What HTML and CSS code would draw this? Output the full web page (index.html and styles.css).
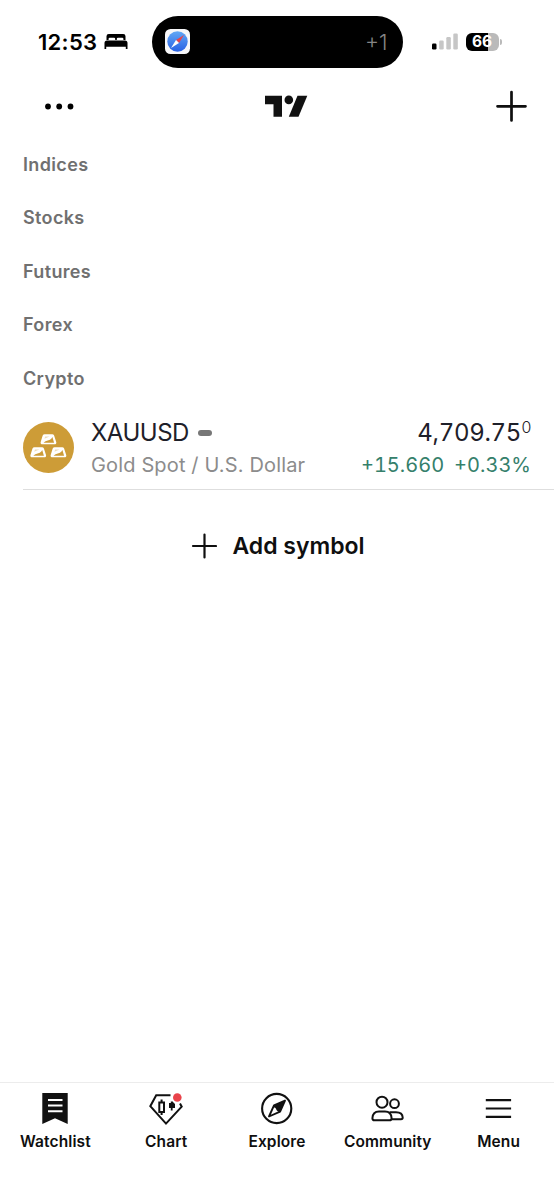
FILE: index.html
```html
<!DOCTYPE html>
<html lang="en">
<head>
<meta charset="utf-8">
<title>Watchlist</title>
<link rel="stylesheet" href="styles.css">
</head>
<body>
<div class="app">
  <div class="status">
    <span class="time">12:53</span>
    <svg class="bed" width="24" height="17" viewBox="0 0 24 17"><path d="M2.500 7V3.300Q2.500 1 4.800 1H19.200Q21.500 1 21.500 3.300V7H19.400V5.800Q19.400 4.700 18.200 4.700H14Q12.800 4.700 12.800 5.800V7H11.200V5.800Q11.200 4.700 10 4.700H5.800Q4.600 4.700 4.600 5.800V7Z"/><path d="M.5 16V10Q.5 7.500 3 7.500H21Q23.500 7.500 23.500 10V16H21.800V13.800H2.200V16Z"/></svg>
    <div class="island">
      <svg width="25" height="25" viewBox="0 0 25 25"><defs><linearGradient id="sky" x1="0" y1="0" x2="0" y2="1"><stop offset="0" stop-color="#62a8f5"/><stop offset="1" stop-color="#2861e4"/></linearGradient></defs><rect width="25" height="25" rx="5.500" fill="#f7f7f9"/><circle cx="12.500" cy="12.500" r="10.200" fill="url(#sky)"/><path d="M19 6L11 11L14 14Z" fill="#e8434b"/><path d="M6 19L11 11L14 14Z" fill="#fff"/></svg>
      <span class="more">+1</span>
    </div>
    <svg class="signal" width="27" height="17" viewBox="0 0 27 17"><rect x="0" y="10.500" width="4.500" height="6" rx="1.200"/><g fill="#c6c6c6"><rect x="7.200" y="7.500" width="4.500" height="9" rx="1.200"/><rect x="14.300" y="4" width="4.500" height="12.500" rx="1.200"/><rect x="21.300" y=".5" width="4.500" height="16" rx="1.200"/></g></svg>
    <div class="battery">66</div>
    <i class="cap"></i>
  </div>
  <header class="header">
    <svg width="32" height="8" viewBox="0 0 32 8"><circle cx="4" cy="4.500" r="2.900"/><circle cx="15.200" cy="4.500" r="2.900"/><circle cx="26.500" cy="4.500" r="2.900"/></svg>
    <svg width="44" height="22" viewBox="0 0 44 22" fill="#111"><path d="M1 .7H18V21.700H9.500V9.200H1Z"/><circle cx="24.800" cy="4.900" r="4.300"/><path d="M33.500 .7H43.300L34.500 21.700H24.800Z"/></svg>
    <svg width="32" height="32" viewBox="0 0 32 32" class="stroke-plus"><path d="M16.500 2V30.500M2.500 16.300H30.500"/></svg>
  </header>
  <main class="list">
    <h2>Indices</h2>
    <h2>Stocks</h2>
    <h2>Futures</h2>
    <h2>Forex</h2>
    <h2>Crypto</h2>
    <div class="row">
      <svg class="gold" width="51" height="51" viewBox="0 0 51 51"><defs><g id="bar"><path d="M4.200 1H11.700Q12.500 1 12.800 1.800L14.900 8.200Q15.200 9.500 14 9.500H2Q.6 9.500 1 8.200L3 1.800Q3.300 1 4.200 1Z" fill="#fff" stroke="#fff" stroke-width="1.700" stroke-linejoin="round"/><path d="M3 8.700L5 7.300L9.500 5.700Q11.300 4.900 11.900 3L13.600 8.700Z" fill="#cd9c37"/><path d="M4.700 2.500H9L3.900 4.800Z" fill="#cd9c37" opacity=".35"/></g></defs><circle cx="25.500" cy="25.500" r="25.500" fill="#cd9c37"/><use href="#bar" x="17.500" y="12"/><use href="#bar" x="7.300" y="25"/><use href="#bar" x="27.500" y="25"/></svg>
      <div class="names"><div class="line"><span class="symbol">XAUUSD</span><i class="dash"></i></div><div class="desc">Gold Spot / U.S. Dollar</div></div>
      <div class="values"><div class="price">4,709.75<sup>0</sup></div><div class="change"><span>+15.660</span><span>+0.33%</span></div></div>
    </div>
    <div class="add"><svg width="26" height="26" viewBox="0 0 26 26"><path d="M13.500 1.500V24.500M2 13H25"/></svg><span>Add symbol</span></div>
  </main>
  <nav class="tabs">
    <div class="tab"><svg width="34" height="34" viewBox="0 0 34 34"><path d="M4.300 1H29.700V32L17 26.300L4.300 32Z" fill="#111"/><path d="M10 8H24.500M10 13.500H24.500M10 19.200H24.500" stroke="#fff" stroke-width="2"/></svg><span>Watchlist</span></div>
    <div class="tab"><svg width="34" height="34" viewBox="0 0 34 34" fill="none" stroke="#111" stroke-width="2"><path d="M21.500 3.200H7.200L1.300 14.200L17 31.600L32.700 14.700L31 11.500"/><path d="M10.300 10.500H15V20H10.300ZM12.600 7.500V10.500M12.600 20V23"/><path d="M22.700 9.500V18.500" stroke-width="1.800"/><path d="M20 11H22L23.500 9.500L26 12V16H20Z" fill="#111" stroke="none"/><circle cx="28.300" cy="5.500" r="4.300" fill="#e9434a" stroke="none"/></svg><span>Chart</span></div>
    <div class="tab"><svg width="34" height="34" viewBox="0 0 34 34"><circle cx="16.700" cy="16.500" r="14.600" fill="none" stroke="#111" stroke-width="2.100"/><path d="M25 8.500L14 13.400L9 24.500L20.100 19.600Z" fill="none" stroke="#111" stroke-width="1.900" stroke-linejoin="round"/><path d="M25 8.500L14 13.400L13.300 15L15.500 16L16.800 18.600L18.800 20.100L20.100 19.600Z" fill="#111"/></svg><span>Explore</span></div>
    <div class="tab"><svg width="34" height="34" viewBox="0 0 34 34" fill="none" stroke="#111" stroke-width="2"><g transform="translate(-.5 0)"><circle cx="11.500" cy="10.200" r="5.500"/><circle cx="24" cy="11.700" r="4.400"/><path d="M4 28.300Q1.900 28.300 1.900 26.200Q2.200 19.400 8.500 19.400H14.500Q20.800 19.400 21.100 26.200Q21.100 28.300 19 28.300Z"/><path d="M19 20.200H25.500Q32 20.200 32.200 25.500Q32.200 27.200 30.500 27.200H21"/></g></svg><span>Community</span></div>
    <div class="tab"><svg width="34" height="34" viewBox="0 0 34 34"><path d="M3.800 8.100H29.100M3.800 16.500H29.100M3.800 24.900H29.100" stroke="#111" stroke-width="2.100"/></svg><span>Menu</span></div>
  </nav>
</div>
</body>
</html>
```
FILE: styles.css
```css
* { box-sizing: border-box; }
body { margin: 0; background: #fff; color: #0f0f0f; font-family: Inter, "Liberation Sans", sans-serif; }
svg { display: block; flex: none; }
.app { height: 1200px; display: flex; flex-direction: column; }
.status { height: 83px; display: flex; align-items: center; padding-left: 38px; color: #000; }
.time { width: 66px; font-size: 22px; font-weight: 600; line-height: 26px; letter-spacing: .3px; white-space: nowrap; }
.island { width: 251px; height: 52px; margin-left: 23.500px; padding: 0 15px 0 13px; border-radius: 26px; background: #000; display: flex; align-items: center; justify-content: space-between; }
.more { color: #858585; font-size: 21.500px; font-weight: 300; line-height: 26px; padding-top: 1px; }
.signal { margin-left: 29px; }
.battery { width: 33px; height: 18px; margin-left: 7px; border-radius: 6px; background: linear-gradient(90deg, #000 67%, #bababa 67%); color: #fff; font-size: 15.500px; font-weight: 700; line-height: 18px; text-align: center; }
.cap { width: 2px; height: 6px; margin-left: 1px; border-radius: 0 2px 2px 0; background: #bababa; }
.header { height: 46px; padding: 0 27px 0 44px; display: grid; grid-template-columns: 1fr auto 1fr; align-items: center; }
.header svg:last-child { justify-self: end; }
.stroke-plus { stroke: #0f0f0f; stroke-width: 2.700; stroke-linecap: round; }
.list { flex: 1; padding-left: 23px; padding-top: 8.500px; }
h2 { margin: 0; height: 53.500px; line-height: 53.500px; font-size: 18px; font-weight: 600; letter-spacing: .35px; color: #707070; }
.row { height: 84.500px; padding: 17px 23px 0 0; border-bottom: 1px solid #dedede; display: flex; }
.names { margin-left: 17px; flex: 1; }
.line { display: flex; align-items: center; height: 32px; }
.symbol, .price { font-size: 24px; line-height: 32px; color: #1e2029; }
.symbol { letter-spacing: -.5px; }
.dash { width: 14px; height: 6px; border-radius: 3px; background: #777; margin-left: 9px; }
.desc, .change { font-size: 20px; line-height: 32px; color: #8c8c8c; white-space: nowrap; }
.desc { letter-spacing: .15px; }
.row > div { margin-top: -5px; }
.values { text-align: right; font-variant-numeric: tabular-nums; }
.price { height: 32px; letter-spacing: -.3px; }
.price sup { font-size: 16px; font-weight: 300; line-height: 0; letter-spacing: -.5px; vertical-align: 8.500px; }
.change { color: #35806b; display: flex; justify-content: flex-end; gap: 10px; }
.add { margin: 42px 22px 0 0; padding-left: 1px; display: flex; justify-content: center; align-items: center; gap: 15px; font-size: 23px; line-height: 28px; font-weight: 600; }
.add svg { stroke: #0f0f0f; stroke-width: 2.200; stroke-linecap: round; }
.tabs { height: 118px; border-top: 1px solid #ececec; display: grid; grid-template-columns: repeat(5, 1fr); padding-top: 9px; }
.tab { display: flex; flex-direction: column; align-items: center; font-size: 15.500px; font-weight: 600; line-height: 20px; letter-spacing: .1px; }
.tab span { margin-top: 6px; }
```
